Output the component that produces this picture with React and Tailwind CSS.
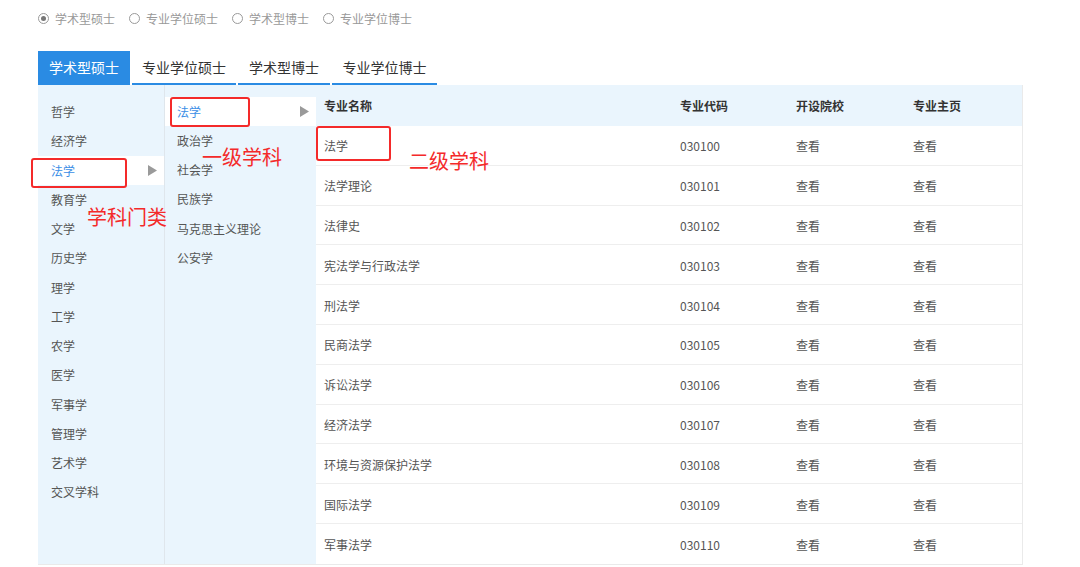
import React from "react";

const categories = [
  "哲学",
  "经济学",
  "法学",
  "教育学",
  "文学",
  "历史学",
  "理学",
  "工学",
  "农学",
  "医学",
  "军事学",
  "管理学",
  "艺术学",
  "交叉学科",
];

const firstLevel = ["法学", "政治学", "社会学", "民族学", "马克思主义理论", "公安学"];

const majors = [
  ["法学", "030100"],
  ["法学理论", "030101"],
  ["法律史", "030102"],
  ["宪法学与行政法学", "030103"],
  ["刑法学", "030104"],
  ["民商法学", "030105"],
  ["诉讼法学", "030106"],
  ["经济法学", "030107"],
  ["环境与资源保护法学", "030108"],
  ["国际法学", "030109"],
  ["军事法学", "030110"],
];

const degreeTypes = ["学术型硕士", "专业学位硕士", "学术型博士", "专业学位博士"];

function Arrow() {
  return (
    <svg width="9" height="11" viewBox="0 0 9 11" className="shrink-0">
      <path d="M0 0 L9 5.5 L0 11 Z" fill="#9a9a9a" />
    </svg>
  );
}

function Radio({ checked }) {
  return (
    <span className="w-[11px] h-[11px] rounded-full border border-[#9a9a9a] flex items-center justify-center shrink-0">
      {checked && <span className="w-[5px] h-[5px] rounded-full bg-[#777]" />}
    </span>
  );
}

export default function App() {
  const tabWidths = ["w-[92px]", "w-[104px]", "w-[92px]", "w-[105px]"];

  return (
    <div
      className="relative w-[1080px] h-[567px] bg-white overflow-hidden"
      style={{ fontFamily: '"Noto Sans CJK SC", "Noto Sans", sans-serif' }}
    >
      {/* degree radios */}
      <div className="flex items-center gap-[14px] pl-[38px] pt-[11px] h-[26px] text-[12px] text-[#999]">
        {degreeTypes.map((d, i) => (
          <label key={d} className="flex items-center gap-[6px]">
            <Radio checked={i === 0} />
            <span>{d}</span>
          </label>
        ))}
      </div>

      {/* tabs */}
      <div className="mt-[25px] ml-[38px] flex gap-[2px] text-[14px]">
        {degreeTypes.map((d, i) => (
          <div
            key={d}
            className={`${tabWidths[i]} h-[34px] flex items-center justify-center border-b-2 border-[#2a8be3] ${
              i === 0 ? "bg-[#2a8be3] text-white" : "text-[#333]"
            }`}
          >
            {d}
          </div>
        ))}
      </div>

      {/* panel */}
      <div className="ml-[38px] w-[985px] h-[480px] flex border-b border-r border-[#eaeaea]">
        {/* categories */}
        <div className="w-[127px] bg-[#eaf5fd] border-r border-[#dfe6ec] pt-[12.5px] text-[12px] text-[#555]">
          {categories.map((c) => (
            <div
              key={c}
              className={`h-[29.25px] flex items-center justify-between pl-[13px] pr-[7px] ${
                c === "法学" ? "bg-white text-[#3a8ee6]" : ""
              }`}
            >
              <span>{c}</span>
              {c === "法学" && <Arrow />}
            </div>
          ))}
        </div>

        {/* first level */}
        <div className="w-[151px] bg-[#eaf5fd] pt-[12px] text-[12px] text-[#555]">
          {firstLevel.map((c, i) => (
            <div
              key={c}
              className={`h-[29.25px] flex items-center justify-between pl-[12px] pr-[7px] ${
                i === 0 ? "bg-white text-[#3a8ee6]" : ""
              }`}
            >
              <span>{c}</span>
              {i === 0 && <Arrow />}
            </div>
          ))}
        </div>

        {/* majors table */}
        <div className="flex-1 text-[12px] text-[#555]">
          <div className="h-[41px] pt-[1px] bg-[#eaf5fd] flex items-center font-bold text-[#333]">
            <div className="w-[364px] pl-[8px]">专业名称</div>
            <div className="w-[116px]">专业代码</div>
            <div className="w-[117px]">开设院校</div>
            <div className="flex-1">专业主页</div>
          </div>
          {majors.map(([name, code]) => (
            <div
              key={code}
              className="h-[39.8px] pt-[2px] flex items-center border-b border-[#eeeeee] last:border-b-0"
            >
              <div className="w-[364px] pl-[8px]">{name}</div>
              <div className="w-[116px]">{code}</div>
              <div className="w-[117px]">查看</div>
              <div className="flex-1">查看</div>
            </div>
          ))}
        </div>
      </div>

      {/* annotations */}
      <div className="absolute left-[31px] top-[158px] w-[96px] h-[30px] border-2 border-[#f42a2a] rounded-[3px]" />
      <div className="absolute left-[170px] top-[97px] w-[80px] h-[30px] border-2 border-[#f42a2a] rounded-[3px]" />
      <div className="absolute left-[316px] top-[126px] w-[75px] h-[35px] border-2 border-[#f42a2a] rounded-[3px]" />
      <div className="absolute left-[87px] top-[207px] text-[20px] leading-[20px] text-[#f42a2a]">学科门类</div>
      <div className="absolute left-[202px] top-[147px] text-[20px] leading-[20px] text-[#f42a2a]">一级学科</div>
      <div className="absolute left-[409px] top-[151px] text-[20px] leading-[20px] text-[#f42a2a]">二级学科</div>
    </div>
  );
}
